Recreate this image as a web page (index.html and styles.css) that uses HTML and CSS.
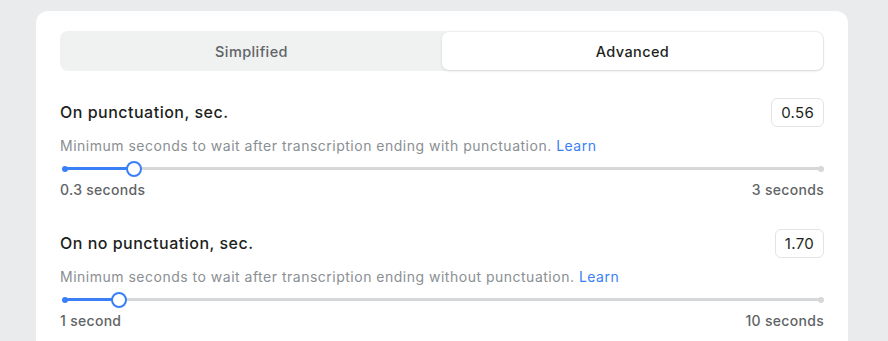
FILE: index.html
```html
<!DOCTYPE html>
<html lang="en">
<head>
  <meta charset="UTF-8">
  <title>Endpointing</title>
  <link rel="stylesheet" href="styles.css">
</head>
<body>
<div class="card">
  <!-- Mode toggle -->
  <div class="toggle">
    <div class="tab">Simplified</div>
    <div class="tab active">Advanced</div>
  </div>

  <!-- On punctuation -->
  <div class="setting">
    <div class="setting-head">
      <div class="setting-title">On punctuation, sec.</div>
      <div class="value-box">0.56</div>
    </div>
    <div class="setting-desc">Minimum seconds to wait after transcription ending with punctuation. <a href="#">Learn</a></div>
    <div class="slider">
      <div class="track">
        <div class="fill" style="width: 9.3%"></div>
        <div class="thumb" style="left: 9.3%"></div>
      </div>
    </div>
    <div class="range">
      <span>0.3 seconds</span>
      <span>3 seconds</span>
    </div>
  </div>

  <!-- On no punctuation -->
  <div class="setting">
    <div class="setting-head">
      <div class="setting-title">On no punctuation, sec.</div>
      <div class="value-box">1.70</div>
    </div>
    <div class="setting-desc">Minimum seconds to wait after transcription ending without punctuation. <a href="#">Learn</a></div>
    <div class="slider">
      <div class="track">
        <div class="fill" style="width: 7.3%"></div>
        <div class="thumb" style="left: 7.3%"></div>
      </div>
    </div>
    <div class="range">
      <span>1 second</span>
      <span>10 seconds</span>
    </div>
  </div>
</div>
</body>
</html>
```

FILE: styles.css
```css
body {
  margin: 0;
  padding: 11px 0 0 36px;
  font-family: 'Inter', sans-serif;
  background: #e9ebec;
  overflow: hidden;
}

.card {
  width: 764px;
  height: 400px;
  padding: 20px 24px;
  background: #fff;
  border-radius: 12px;
  box-sizing: content-box;
}

.toggle {
  display: flex;
  height: 40px;
  padding: 1px;
  box-sizing: border-box;
  background: #f0f1f1;
  border-radius: 8px;
}

.tab {
  flex: 1;
  display: flex;
  align-items: center;
  justify-content: center;
  font-size: 14.5px;
  font-weight: 500;
  letter-spacing: 0.4px;
  color: #5f6467;
  border-radius: 7px;
}

.tab.active {
  background: #fff;
  color: #1d1f21;
  box-shadow: 0 1px 3px rgba(0,0,0,0.12);
}

.setting {
  margin-top: 26px;
}

.setting + .setting {
  margin-top: 29px;
}

.setting-head {
  display: flex;
  justify-content: space-between;
  align-items: center;
  height: 30px;
}

.setting-title {
  font-size: 16px;
  font-weight: 500;
  letter-spacing: 0.5px;
  color: #1d1f21;
}

.value-box {
  height: 29px;
  padding: 0 9px;
  display: flex;
  align-items: center;
  border: 1px solid #e1e3e4;
  border-radius: 6px;
  font-size: 15px;
  letter-spacing: 0.3px;
  color: #1d1f21;
  box-sizing: border-box;
}

.setting-desc {
  margin-top: 9px;
  font-size: 14px;
  line-height: 20px;
  letter-spacing: 0.5px;
  color: #8a8f93;
}

.setting-desc a {
  color: #3a7ff5;
  text-decoration: none;
}

.slider {
  padding: 11px 2px 0 4px;
}

.track {
  position: relative;
  height: 3px;
  background: #d5d7d8;
  border-radius: 2px;
}

.track::before,
.track::after {
  content: '';
  position: absolute;
  top: -1.5px;
  width: 6px;
  height: 6px;
  border-radius: 50%;
}

.track::before {
  left: -2px;
  background: #3a7ff5;
}

.track::after {
  right: -2px;
  background: #d5d7d8;
}

.fill {
  height: 3px;
  background: #3a7ff5;
  border-radius: 2px;
}

.thumb {
  position: absolute;
  top: -6.5px;
  width: 16px;
  height: 16px;
  margin-left: -8px;
  background: #fff;
  border: 2px solid #3a7ff5;
  border-radius: 50%;
  box-sizing: border-box;
}

.range {
  display: flex;
  justify-content: space-between;
  margin-top: 11px;
  font-size: 14px;
  line-height: 18px;
  font-weight: 500;
  letter-spacing: 0.3px;
  color: #5f6467;
}
```
